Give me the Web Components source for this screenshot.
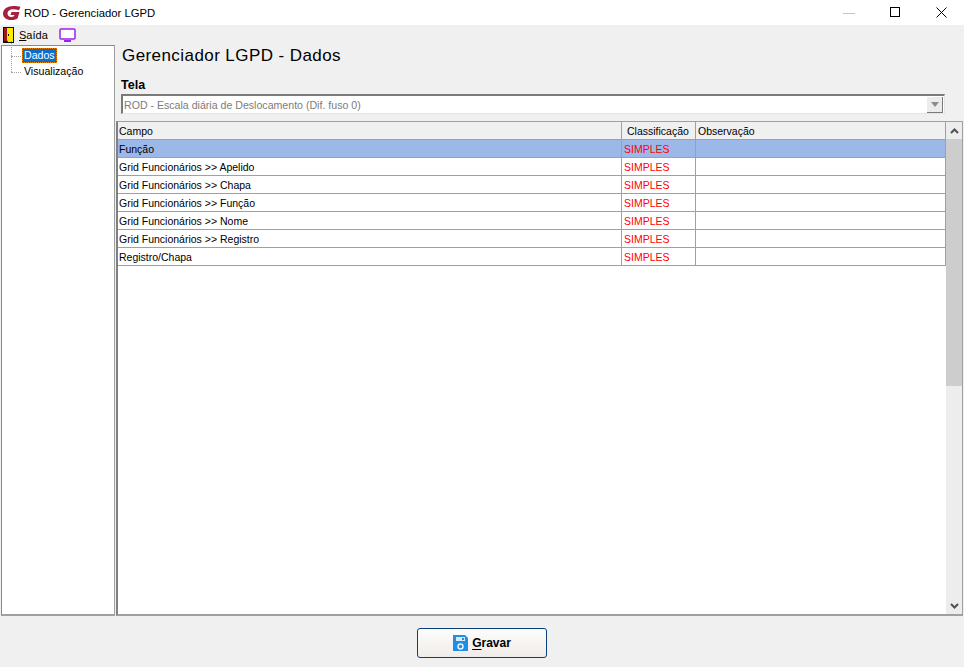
<!DOCTYPE html>
<html>
<head>
<meta charset="utf-8">
<title>ROD - Gerenciador LGPD</title>
<style>
  html, body { margin: 0; height: 100%; background: #f0f0f0; overflow: hidden; }
  body { font: 10.500px "Liberation Sans", Arial, sans-serif; color: #000; }
</style>
</head>
<body>
<app-window>
  <title-bar slot="title">ROD - Gerenciador LGPD</title-bar>
  <menu-bar slot="menu"></menu-bar>
  <nav-tree slot="tree"></nav-tree>
  <lgpd-panel slot="main"></lgpd-panel>
  <save-button slot="footer">Gravar</save-button>
</app-window>
<script>
'use strict'

const shadow = (el, html) => {
  el.attachShadow({ mode: 'open' }).innerHTML = html
}

customElements.define('app-window', class extends HTMLElement {
  constructor() {
    super()
    shadow(this, `
      <style>
        :host { display: grid; width: 964px; height: 667px; grid-template-rows: 25px 20px 571px 51px; grid-template-columns: 115px 1fr; background: #f0f0f0; }
        .title { grid-column: 1 / 3; }
        .menu { grid-column: 1 / 3; }
        .tree { padding-left: 1px; display: flex; }
        .main { padding: 0 1px 0 1px; display: flex; min-width: 0; }
        .footer { grid-column: 1 / 3; display: flex; justify-content: center; padding-top: 12px; }
      </style>
      <div class="title"><slot name="title"></slot></div>
      <div class="menu"><slot name="menu"></slot></div>
      <div class="tree"><slot name="tree"></slot></div>
      <div class="main"><slot name="main"></slot></div>
      <div class="footer"><slot name="footer"></slot></div>
    `)
  }
})

customElements.define('title-bar', class extends HTMLElement {
  constructor() {
    super()
    shadow(this, `
      <style>
        :host { display: flex; align-items: center; height: 25px; background: #fff; font-size: 11.300px; color: #000; }
        .logo { width: 18px; height: 14px; margin: 0 3px 0 3px; }
        .text { flex: 1; }
        .btn { width: 46px; height: 25px; display: flex; align-items: center; justify-content: center; }
        svg { display: block; }
      </style>
      <svg class="logo" viewBox="0 0 18 14">
        <path d="M17.500.8C15.500.2 13 0 10.500 0 4.500 0 0 3 0 7.500 0 11.500 3.500 14 8 14c2.500 0 4.500-.5 6.500-1.500L16.500 6h-8l-1 3h4l-.5 1.300c-1 .5-1.800.7-2.700.7-2.300 0-3.800-1.500-3.800-3.500 0-2.500 2.500-4.300 5.500-4.300 2 0 4 .3 6 1z" fill="#a6213d"/>
      </svg>
      <span class="text"><slot></slot></span>
      <span class="btn"><svg width="12" height="12"><path d="M0 6.500h12" stroke="#c4c4c4"/></svg></span>
      <span class="btn"><svg width="11" height="11"><rect x=".5" y=".5" width="9" height="9" fill="none" stroke="#000"/></svg></span>
      <span class="btn"><svg width="11" height="11"><path d="M.5.500l10 10M10.500.500l-10 10" stroke="#000" fill="none"/></svg></span>
    `)
  }
})

customElements.define('menu-bar', class extends HTMLElement {
  constructor() {
    super()
    shadow(this, `
      <style>
        :host { display: flex; align-items: center; height: 20px; background: #f0f0f0; font-size: 11px; }
        .door { margin-left: 3px; }
        .label { margin-left: 5px; width: 32px; }
        u { text-underline-offset: 1px; }
        svg { display: block; }
        .screen { margin-left: 8px; }
      </style>
      <svg class="door" width="11" height="16" viewBox="0 0 11 16">
        <rect width="11" height="16" fill="#111"/>
        <path d="M1 1h3v13H1z" fill="#a01818"/>
        <path d="M4 1h6v14H5l-1-2z" fill="#ffec00"/>
        <rect x="5" y="7" width="1" height="2" fill="#111"/>
      </svg>
      <span class="label"><u>S</u>aída</span>
      <svg class="screen" width="17" height="15" viewBox="0 0 17 15">
        <rect x="1" y="1" width="15" height="10" rx="1" fill="#fff" stroke="#a020f0" stroke-width="1.500"/>
        <path d="M5 13h7" stroke="#a020f0" stroke-width="2"/>
      </svg>
    `)
  }
})

customElements.define('nav-tree', class extends HTMLElement {
  constructor() {
    super()
    shadow(this, `
      <style>
        :host { display: block; flex: 1; box-sizing: border-box; background: #fff; border: 1px solid #a0a0a0; border-left-color: #8a8a8a; border-top-color: #8a8a8a; border-bottom-width: 2px; position: relative; font-size: 10.600px; }
        ul { list-style: none; margin: 0; padding: 2px 0 0 20px; }
        li { height: 16px; line-height: 15px; position: relative; }
        li span { display: inline-block; padding: 0 2px; height: 15px; }
        .on { background: #0a6ed1; color: #fff; outline: 1px dotted #f08000; outline-offset: -1px; }
        li::before { content: ""; position: absolute; left: -11px; top: 8px; width: 10px; border-top: 1px dotted #a0a0a0; }
        li::after { content: ""; position: absolute; left: -11px; top: -7px; height: 15px; border-left: 1px dotted #a0a0a0; }
      </style>
      <ul>
        <li><span class="on">Dados</span></li>
        <li><span>Visualização</span></li>
      </ul>
    `)
  }
})

customElements.define('lgpd-panel', class extends HTMLElement {
  constructor() {
    super()
    shadow(this, `
      <style>
        :host { display: flex; flex-direction: column; flex: 1; min-width: 0; }
        h1 { margin: 0; padding: 1px 0 0 6px; height: 30px; box-sizing: border-box; font: 400 17px/20px "Liberation Sans", sans-serif; letter-spacing: 0.025em; }
        .label { padding: 3px 0 0 5px; height: 19px; box-sizing: border-box; font-weight: 700; font-size: 12.500px; line-height: 14px; }
        combo-box { margin: 0 18px 7px 5px; }
        data-grid { flex: 1; min-height: 0; }
      </style>
      <h1>Gerenciador LGPD - Dados</h1>
      <div class="label">Tela</div>
      <combo-box>ROD - Escala diária de Deslocamento (Dif. fuso 0)</combo-box>
      <data-grid></data-grid>
    `)
  }
})

customElements.define('combo-box', class extends HTMLElement {
  constructor() {
    super()
    shadow(this, `
      <style>
        :host { display: flex; align-items: center; height: 20px; box-sizing: border-box; background: #fff; border: 2px solid #7a7a7a; border-right-color: #e4e4e4; border-bottom-color: #e4e4e4; border-right-width: 1px; border-bottom-width: 1px; color: #7c7c7c; font-size: 10.600px; }
        .text { flex: 1; padding-left: 1px; }
        .arrow { width: 16px; height: 16px; box-sizing: border-box; margin-right: 1px; background: #ececec; border-right: 1px solid #7a7a7a; border-bottom: 1px solid #7a7a7a; display: flex; align-items: center; justify-content: center; }
        svg { display: block; }
      </style>
      <span class="text"><slot></slot></span>
      <span class="arrow"><svg width="8" height="5"><path d="M0 0h8L4 5z" fill="#8c8c8c"/></svg></span>
    `)
  }
})

const rows = [
  'Função',
  'Grid Funcionários >> Apelido',
  'Grid Funcionários >> Chapa',
  'Grid Funcionários >> Função',
  'Grid Funcionários >> Nome',
  'Grid Funcionários >> Registro',
  'Registro/Chapa'
]

customElements.define('data-grid', class extends HTMLElement {
  constructor() {
    super()
    const body = rows.map((r, i) => `
      <div class="row${i === 0 ? ' sel' : ''}">
        <span class="cell">${r.replace(/>/g, '&gt;')}</span>
        <span class="cell red">SIMPLES</span>
        <span class="cell"></span>
      </div>`).join('')
    shadow(this, `
      <style>
        :host { display: flex; box-sizing: border-box; background: #fff; border: 1px solid #a0a0a0; border-left-width: 2px; border-left-color: #808080; border-bottom-width: 2px; font-size: 10.500px; }
        .table { flex: 1; min-width: 0; }
        .row { display: grid; grid-template-columns: 504px 74px 1fr; height: 18px; box-sizing: border-box; border-bottom: 1px solid #a0a0a0; }
        .head { background: #f0f0f0; }
        .cell { padding-left: 2px; line-height: 18px; border-right: 1px solid #a0a0a0; white-space: nowrap; overflow: hidden; }
        .cell:first-child { padding-left: 1px; }
        .head .cell:nth-child(2) { padding-left: 5px; }
        .red { color: #f00; }
        .sel { background: #9cb8e8; }
        .bar { width: 16px; display: flex; flex-direction: column; background: #ededed; }
        .btn { height: 17px; display: flex; align-items: center; justify-content: center; }
        .thumb { height: 247px; background: #cdcdcd; }
        .rest { flex: 1; }
        svg { display: block; }
      </style>
      <div class="table">
        <div class="row head">
          <span class="cell">Campo</span>
          <span class="cell">Classificação</span>
          <span class="cell">Observação</span>
        </div>
        ${body}
      </div>
      <div class="bar">
        <span class="btn"><svg width="9" height="6"><path d="M1 5l3.500-3.500L8 5" fill="none" stroke="#505050" stroke-width="2"/></svg></span>
        <div class="thumb"></div>
        <div class="rest"></div>
        <span class="btn"><svg width="9" height="6"><path d="M1 1l3.500 3.500L8 1" fill="none" stroke="#505050" stroke-width="2"/></svg></span>
      </div>
    `)
  }
})

customElements.define('save-button', class extends HTMLElement {
  constructor() {
    super()
    shadow(this, `
      <style>
        :host { display: flex; align-items: center; justify-content: center; gap: 4px; width: 130px; height: 30px; box-sizing: border-box; border: 1px solid #0a3f7a; border-radius: 3px; background: linear-gradient(#fdfdfd, #f0ece8); font-weight: 700; font-size: 12px; }
        u { text-underline-offset: 2px; }
        svg { display: block; }
      </style>
      <svg width="15" height="16" viewBox="0 0 15 16">
        <path d="M0 0h12l3 3v13H0z" fill="#1e8fe8"/>
        <rect x="3" y="2" width="9" height="4" fill="#d8e8f4"/>
        <rect x="9" y="3" width="2" height="2" fill="#1e8fe8"/>
        <circle cx="7.500" cy="11.500" r="2.500" fill="none" stroke="#e8f2fa" stroke-width="1.500"/>
      </svg>
      <span><u>G</u>ravar</span>
    `)
  }
})
</script>
</body>
</html>
